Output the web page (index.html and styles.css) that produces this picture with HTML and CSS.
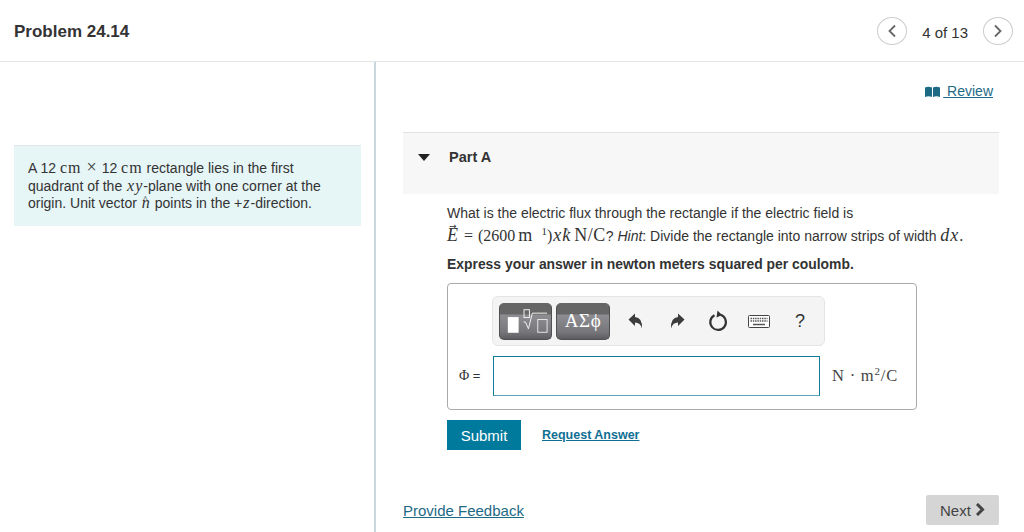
FILE: index.html
```html
<!DOCTYPE html>
<html lang="en">
<head>
<meta charset="utf-8">
<title>Problem 24.14</title>
<link rel="stylesheet" href="styles.css">
</head>
<body>
<header class="topbar">
  <h1 class="title">Problem 24.14</h1>
  <nav class="pager">
    <span class="circle"><svg width="10" height="14" viewBox="0 0 10 14"><path d="M8 1.500L2.500 7L8 12.500" class="chev"/></svg></span>
    <span class="count">4 of 13</span>
    <span class="circle"><svg width="10" height="14" viewBox="0 0 10 14"><path d="M2 1.500L7.500 7L2 12.500" class="chev"/></svg></span>
  </nav>
</header>
<div class="main">
  <aside class="left">
    <div class="intro">A 12 <span class="m cm">cm</span><span class="m times">×</span>12 <span class="m cm">cm</span> rectangle lies in the first quadrant of the <i class="m xy">xy</i>-plane with one corner at the origin. Unit vector <span class="hatwrap"><i class="m xy">n</i><span class="hat">^</span></span> points in the +<i class="m xy">z</i>-direction.</div>
  </aside>
  <section class="right">
    <div class="reviewrow">
      <a class="review" href="#"><svg width="15" height="11" viewBox="0 0 15 11"><path d="M0 1.500Q3.500 0 7 1.500V11Q3.500 9.500 0 11ZM8 1.500Q11.500 0 15 1.500V11Q11.500 9.500 8 11Z" fill="#1d6a85"/></svg><span class="reviewtext">&nbsp;Review</span></a>
    </div>
    <div class="part">
      <svg class="caret" width="12" height="7" viewBox="0 0 12 7"><path d="M0 0H12L6 7Z" fill="#222"/></svg>
      <span class="partname">Part A</span>
    </div>
    <div class="body">
      <p class="question">What is the electric flux through the rectangle if the electric field is<br><span class="hatwrap"><i class="m large">E</i><span class="vec">→</span></span><span class="m big eq">=</span><span class="m big">(2600</span><span class="m large unitm">m</span><sup class="m neg">1</sup><span class="m big">)</span><i class="m large wide">x</i><span class="hatwrap"><i class="m large">k</i><span class="hat">^</span></span><span class="m large unitn">N/C</span>? <i>Hint</i>: Divide the rectangle into narrow strips of width <i class="m large dx">dx</i><span class="m big">.</span></p>
      <p class="instruct">Express your answer in newton meters squared per coulomb.</p>
      <div class="answer">
        <div class="toolbar">
          <span class="tbtn tbtn-a">
            <svg width="52" height="36" viewBox="0 0 52 36"><rect x="8" y="14" width="11" height="16" fill="#fff"/><rect x="24.500" y="6.500" width="5.500" height="8" fill="none" stroke="#f2f2f2"/><path d="M24 19H26L29 26L33 10H48" fill="none" stroke="#f2f2f2"/><rect x="38.500" y="16.500" width="9.500" height="13" fill="none" stroke="#e6e6e6"/></svg>
          </span>
          <span class="tbtn tbtn-b">ΑΣϕ</span>
          <span class="tools">
            <svg class="t-undo" width="15" height="16" viewBox="0 0 15 16"><path d="M0.500 6.500L7 0.500V4Q14.500 4.500 14 15.500Q12.500 9.500 7 9.500V13Z" fill="#3c3c3c"/></svg>
            <svg class="t-redo" width="15" height="16" viewBox="0 0 15 16"><path d="M14.500 6.500L8 0.500V4Q0.500 4.500 1 15.500Q2.500 9.500 8 9.500V13Z" fill="#3c3c3c"/></svg>
            <svg class="t-reload" width="20" height="22" viewBox="0 0 20 22"><path d="M6.500 5.200A7.800 7.800 0 1 0 12.500 4.700" fill="none" stroke="#333" stroke-width="2.200"/><path d="M9.500 0.500L14 5L8.500 7.500Z" fill="#333"/></svg>
            <svg class="t-keys" width="22" height="13" viewBox="0 0 22 13"><rect x="0.500" y="0.500" width="21" height="12" rx="1" fill="#fff" stroke="#444"/><path d="M2.500 3.500h17M2.500 6h17" stroke="#555" stroke-width="1.500" stroke-dasharray="1.500 .8"/><path d="M5 9.500h12" stroke="#555" stroke-width="1.500"/></svg>
            <span class="help">?</span>
          </span>
        </div>
        <div class="inputrow">
          <span class="label"><span class="m phi">Φ</span> =</span>
          <span class="field"></span>
          <span class="unit m">N · m<sup class="sq">2</sup>/C</span>
        </div>
      </div>
      <div class="actions">
        <button class="submit" type="button">Submit</button>
        <a class="reqans" href="#">Request Answer</a>
      </div>
    </div>
    <div class="foot">
      <a class="feedback" href="#">Provide Feedback</a>
      <button class="next" type="button">Next <svg width="10" height="13" viewBox="0 0 10 13"><path d="M2 1L7.500 6.500L2 12" fill="none" stroke="#444" stroke-width="3"/></svg></button>
    </div>
  </section>
</div>
</body>
</html>
```
FILE: styles.css
```css
* { box-sizing: border-box; }
html, body { margin: 0; padding: 0; }
body {
  width: 1024px;
  height: 532px;
  overflow: hidden;
  background: #fff;
  color: #333;
  font-family: "Liberation Sans", Arial, sans-serif;
  font-size: 14px;
}
.m { font-family: "Liberation Serif", "Times New Roman", serif; }
.big { font-size: 16px; }
.large { font-size: 18px; }
.cm { font-size: 16px; letter-spacing: 1px; }
.times { font-size: 18px; margin: 0 5px 0 5px; }
.xy { font-size: 16px; letter-spacing: 1px; margin-left: 1px; }
.eq { margin: 0 5px 0 6px; }
.unitm { margin-left: 3px; }
.wide { margin-left: 1px; letter-spacing: 1px; }
.unitn { margin-left: 4px; letter-spacing: 0.500px; }
.dx { margin-left: 0; letter-spacing: 1px; }
.topbar {
  height: 62px;
  border-bottom: 1px solid #e5e5e5;
  display: flex;
  align-items: center;
  justify-content: space-between;
  padding: 0 11px 0 14px;
}
.title { margin: 2px 0 0; font-size: 17px; font-weight: 700; color: #333; }
.pager { display: flex; align-items: center; }
.circle {
  width: 30px;
  height: 28px;
  border: 1px solid #ccc;
  border-radius: 50%;
  display: flex;
  align-items: center;
  justify-content: center;
}
.chev { fill: none; stroke: #666; stroke-width: 1.800; }
.count { font-size: 15px; margin: 4px 15px 0 15px; color: #333; }
.main { display: flex; height: 470px; }
.left {
  width: 376px;
  flex: none;
  border-right: 2px solid #c9d8df;
  padding: 83px 13px 0 14px;
}
.intro {
  background: #e6f5f6;
  border-top: 1px solid #e2e8ea;
  padding: 14px 14px 14px 14px;
  height: 81px;
  font-size: 14px;
  line-height: 17.500px;
  color: #333;
}
.intro .m { line-height: 0; }
.hatwrap { position: relative; display: inline-block; line-height: 0; }
.hat { position: absolute; left: 2px; top: -4px; font-size: 11px; font-family: "Liberation Serif", serif; }
.vec { position: absolute; left: 2px; top: -9px; font-size: 9px; font-family: "DejaVu Sans", sans-serif; }
.right { flex: 1; padding: 0 25px 0 27px; position: relative; display: flex; flex-direction: column; }
.reviewrow { height: 70px; display: flex; justify-content: flex-end; align-items: flex-start; padding: 21px 6px 0 0; }
.review { color: #1d6a85; font-size: 14px; text-decoration: none; display: flex; align-items: center; }
.reviewtext { margin-left: 3px; text-decoration: underline; }
.part {
  height: 62px;
  background: #f7f7f7;
  border-top: 1px solid #e2e2e2;
  display: flex;
  align-items: flex-start;
  padding: 16px 0 0 15px;
}
.caret { margin-top: 5px; }
.partname { margin-left: 19px; font-size: 14.500px; font-weight: 700; color: #333; }
.body { padding-left: 44px; }
.question { margin: 8px 0 0; font-size: 14px; line-height: 22.500px; color: #333; }
.question .m { line-height: 0; }
.neg { font-size: 11px; margin-left: 9px; line-height: 0; }
.instruct { margin: 8px 0 0; font-size: 13.900px; font-weight: 700; color: #333; line-height: 18px; }
.answer {
  margin-top: 10px;
  width: 470px;
  height: 127px;
  border: 1px solid #aaa;
  border-radius: 4px;
  padding: 12px 0 0 11px;
}
.toolbar {
  width: 333px;
  height: 50px;
  margin-left: 33px;
  background: #f4f4f4;
  border: 1px solid #e4e4e4;
  border-radius: 6px;
  display: flex;
  align-items: center;
  padding: 0 0 0 6px;
  gap: 4px;
}
.tbtn {
  height: 37px;
  border-radius: 5px;
  background: linear-gradient(#666 0, #666 10px, #8e8e92 11px, #77777b 28px, #555558 37px);
  border: 1px solid #505052;
  border-top-color: #666;
  display: flex;
  align-items: center;
  justify-content: center;
  color: #fff;
}
.tbtn-a { width: 53px; }
.tbtn-b { width: 54px; font-family: "Liberation Serif", serif; font-size: 19px; letter-spacing: 0.500px; }
.tools { display: flex; align-items: center; margin-left: 14px; }
.t-redo { margin-left: 27px; }
.t-reload { margin-left: 23px; }
.t-keys { margin-left: 20px; }
.help { font-size: 18px; color: #333; margin-left: 25px; }
.inputrow { display: flex; align-items: center; margin-top: 10px; }
.label { font-size: 13px; width: 34px; color: #333; }
.phi { font-size: 14px; }
.field { width: 327px; height: 40px; border: 1px solid #127a9c; border-bottom-color: #5ca3ba; background: #fff; }
.unit { margin-left: 12px; font-size: 16.500px; letter-spacing: 0.800px; color: #444; white-space: nowrap; }
.sq { font-size: 11px; line-height: 0; }
.actions { display: flex; align-items: center; margin-top: 10px; }
.submit {
  width: 74px;
  height: 30px;
  background: #007a9c;
  color: #fff;
  border: 0;
  padding: 0;
  font-family: inherit;
  font-size: 15px;
}
.reqans { margin-left: 21px; color: #0f6f94; font-size: 12.500px; font-weight: 700; }
.foot {
  position: absolute;
  left: 27px;
  right: 25px;
  bottom: 7px;
  display: flex;
  align-items: center;
  justify-content: space-between;
}
.feedback { color: #1d6a85; font-size: 15px; }
.next {
  width: 73px;
  height: 30px;
  background: #d5d5d5;
  border: 0;
  border-radius: 2px;
  color: #444;
  font-family: inherit;
  font-size: 15px;
  padding: 0;
}
```
